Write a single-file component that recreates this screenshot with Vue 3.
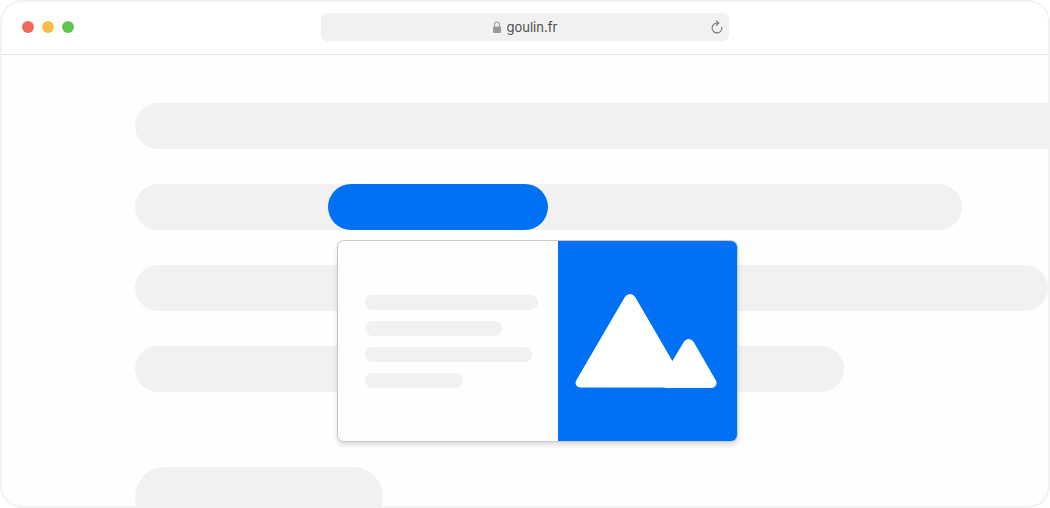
<script setup>
import { ref } from 'vue'

const address = ref('goulin.fr')
const controls = [
  { name: 'Close', tone: 'red' },
  { name: 'Minimize', tone: 'amber' },
  { name: 'Zoom', tone: 'green' }
]
</script>

<template>
  <div class="browser">
    <header class="toolbar">
      <div class="controls">
        <button v-for="c in controls" :key="c.name" type="button" class="dot" :class="c.tone" :aria-label="c.name"></button>
      </div>
      <div class="address">
        <div class="site">
          <svg class="lock" viewBox="0 0 10 13" aria-hidden="true">
            <path d="M2.5 6V3.5a2.5 2.5 0 0 1 5 0V6" fill="none" stroke="#9a9a9a" stroke-width="1.1" />
            <rect x="1" y="5.5" width="8" height="6.5" rx="1" fill="#9a9a9a" />
          </svg>
          <input v-model="address" class="url" type="text" aria-label="Address" />
        </div>
        <button type="button" class="reload" aria-label="Reload">
          <svg viewBox="0 0 14 14" aria-hidden="true">
            <path d="M11.8 7.2A4.9 4.9 0 1 1 7 3.1h1.6" />
            <path d="M6.3 0.8L8.8 3.1L6.3 5.5" />
          </svg>
        </button>
      </div>
    </header>

    <main class="page">
      <div class="bar full"></div>
      <div class="bar second">
        <div class="anchor">
          <a class="link" href="#preview" aria-label="Preview link"></a>
          <section id="preview" class="card">
            <div class="summary">
              <div class="line one"></div>
              <div class="line two"></div>
              <div class="line three"></div>
              <div class="line four"></div>
            </div>
            <div class="picture">
              <svg viewBox="0 0 179 200" aria-hidden="true">
                <path
                  fill="#fff"
                  d="M67 55.7Q69 53 72 53Q75 53 77 55.7L114.4 120L126 100.5Q127.8 98 130.6 98Q133.6 98 135.4 100.5L157.9 139.5C159.8 143 157.2 147 153.5 147H107L106 146.4H22.5C18.5 146.4 16.4 142.8 18.2 139.5Z"
                />
              </svg>
            </div>
          </section>
        </div>
      </div>
      <div class="bar third"></div>
      <div class="bar fourth"></div>
      <div class="bar next"></div>
    </main>
  </div>
</template>

<style>
body {
  margin: 0;
  background: #fff;
}
</style>

<style scoped>
.browser {
  box-sizing: border-box;
  height: 100vh;
  display: flex;
  flex-direction: column;
  overflow: hidden;
  border: 2px solid #f2f2f2;
  border-radius: 22px;
  background: #fefefe;
  font-family: Inter, "Liberation Sans", sans-serif;
}

.toolbar {
  flex: none;
  box-sizing: border-box;
  display: grid;
  grid-template-columns: 1fr 39% 1fr;
  align-items: center;
  height: 53px;
  padding-bottom: 2px;
  border-bottom: 1px solid #e5e5e5;
  background: #fff;
}

.controls {
  display: flex;
  gap: 8px;
  padding-left: 20px;
}

.dot {
  width: 12px;
  height: 12px;
  padding: 0;
  border: 0;
  border-radius: 50%;
}

.red {
  background: #ed6a5e;
}

.amber {
  background: #f4bf50;
}

.green {
  background: #61c554;
}

.address {
  display: grid;
  grid-template-columns: 24px 1fr 24px;
  align-items: center;
  height: 28px;
  border-radius: 6px;
  background: #f1f1f1;
}

.site {
  grid-column: 2;
  display: flex;
  justify-content: center;
  align-items: center;
  gap: 5px;
}

.lock {
  width: 10px;
  height: 13px;
}

.url {
  width: 52px;
  height: 20px;
  padding: 0;
  border: 0;
  outline: 0;
  background: transparent;
  color: #4c4c4c;
  font: 13px/20px Inter, "Liberation Sans", sans-serif;
}

.reload {
  display: flex;
  padding: 0 5px;
  border: 0;
  background: transparent;
}

.reload svg {
  width: 14px;
  height: 14px;
  fill: none;
  stroke: #777;
  stroke-width: 1.1;
  stroke-linecap: round;
  stroke-linejoin: round;
}

.page {
  flex: 1;
  min-height: 0;
  display: flex;
  flex-direction: column;
  gap: 35px;
  padding: 48px 0 0 133px;
}

.bar {
  flex: none;
  height: 46px;
  border-radius: 23px;
  background: #f1f1f1;
}

.full {
  width: 110%;
}

.second {
  box-sizing: border-box;
  width: 90.6%;
  padding-left: 193px;
}

.third {
  width: 100%;
}

.fourth {
  width: 77.7%;
}

.next {
  width: 27.2%;
  height: 60px;
  margin-top: 40px;
  border-radius: 30px;
}

.anchor {
  position: relative;
  width: 220px;
}

.link {
  display: block;
  height: 46px;
  border-radius: 23px;
  background: #0071f5;
}

.card {
  position: absolute;
  z-index: 1;
  top: 56px;
  left: 9px;
  display: flex;
  overflow: hidden;
  border: 1px solid #c9c9c9;
  border-radius: 7px;
  background: #fefefe;
  box-shadow: 0 3px 5px rgba(0, 0, 0, 0.14);
}

.summary {
  box-sizing: border-box;
  display: flex;
  flex-direction: column;
  justify-content: center;
  gap: 11px;
  width: 220px;
  padding-left: 27px;
}

.line {
  height: 15px;
  border-radius: 8px;
  background: #f1f1f1;
}

.one {
  width: 173px;
}

.two {
  width: 137px;
}

.three {
  width: 167px;
}

.four {
  width: 98px;
}

.picture {
  display: flex;
  background: #0071f5;
}

.picture svg {
  width: 179px;
  height: 200px;
}
</style>
